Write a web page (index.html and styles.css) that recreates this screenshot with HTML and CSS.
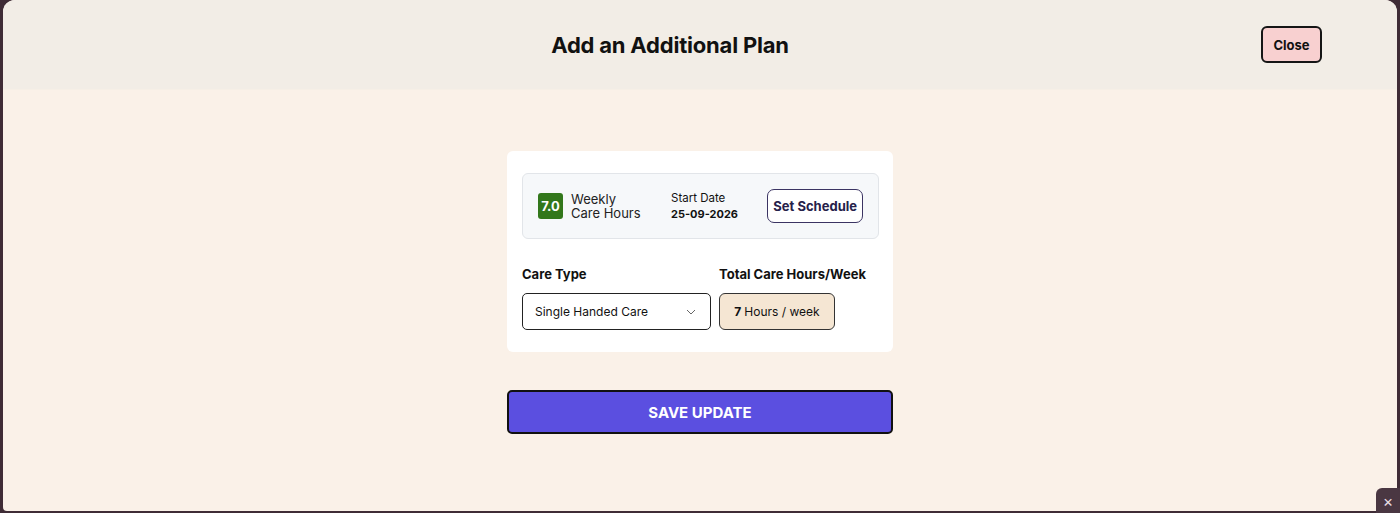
FILE: index.html
```html
<!DOCTYPE html>
<html lang="en">

<head>
  <meta charset="UTF-8">
  <meta name="viewport" content="width=device-width, initial-scale=1.0">
  <title>Add an Additional Plan</title>
  <link rel="stylesheet" href="styles.css">
</head>

<body>
  <div class="modal">
    <div class="modal-head">
      <h1>Add an Additional Plan</h1>
      <button class="close">Close</button>
    </div>
    <div class="modal-body">
      <div class="card">
        <div class="summary">
          <div class="hours">
            <span class="badge">7.0</span>
            <span class="hours-text">Weekly<br>Care Hours</span>
          </div>
          <div class="start">
            <span class="start-label">Start Date</span>
            <span class="start-date">25-09-2026</span>
          </div>
          <button class="schedule">Set Schedule</button>
        </div>
        <div class="fields">
          <div class="field">
            <label>Care Type</label>
            <div class="select">
              <span>Single Handed Care</span>
              <svg width="10" height="6" viewBox="0 0 10 6">
                <path d="M1 1l4 4 4-4" fill="none" stroke="#666" stroke-width="1"/>
              </svg>
            </div>
          </div>
          <div class="field">
            <label>Total Care Hours/Week</label>
            <div class="total"><b>7</b> Hours / week</div>
          </div>
        </div>
      </div>
      <button class="save">SAVE UPDATE</button>
    </div>
  </div>
  <div class="corner">&times;</div>
</body>

</html>
```

FILE: styles.css
```css
* {
  box-sizing: border-box;
}

body {
  margin: 0;
  height: 513px;
  overflow: hidden;
  background: #3f2c36;
  font-family: Inter, "Liberation Sans", sans-serif;
  color: #111;
}

.modal {
  margin: 0 3px;
  height: 511px;
  background: #faf1e8;
  border-radius: 12px 12px 4px 4px;
  overflow: hidden;
}

.modal-head {
  height: 90px;
  background: #f2ede6;
  border-bottom: 1px solid #f6efe6;
  display: flex;
  align-items: center;
  justify-content: center;
  padding-right: 60px;
  position: relative;
}

.modal-head h1 {
  margin: 0;
  font-size: 22px;
  font-weight: 700;
  letter-spacing: -0.2px;
}

.close {
  position: absolute;
  right: 75px;
  top: 26px;
  width: 61px;
  height: 37px;
  background: #f8d0d0;
  border: 2px solid #151515;
  border-radius: 6px;
  font-family: inherit;
  font-size: 13px;
  font-weight: 700;
  color: #111;
}

.modal-body {
  display: flex;
  flex-direction: column;
  align-items: center;
  padding-top: 61px;
}

.card {
  width: 386px;
  background: #fff;
  border-radius: 6px;
  padding: 22px 14px 22px 15px;
}

.summary {
  height: 66px;
  background: #f6f8fa;
  border: 1px solid #e2e5e9;
  border-radius: 6px;
  display: flex;
  align-items: center;
  padding: 0 15px 0 15px;
}

.hours {
  display: flex;
  align-items: center;
  gap: 8px;
  width: 133px;
}

.badge {
  width: 25px;
  height: 26px;
  background: #32771b;
  color: #fff;
  border-radius: 3px;
  font-size: 13px;
  font-weight: 700;
  display: flex;
  align-items: center;
  justify-content: center;
}

.hours-text {
  font-size: 13px;
  line-height: 14px;
  color: #222;
}

.start {
  display: flex;
  flex-direction: column;
  gap: 2px;
  font-size: 11.5px;
}

.start-date {
  font-weight: 700;
  font-size: 11px;
}

.schedule {
  margin-left: auto;
  height: 34px;
  padding: 0 5px;
  background: #fff;
  border: 1px solid #3b3463;
  border-radius: 7px;
  font-family: inherit;
  font-size: 13px;
  font-weight: 700;
  color: #26214a;
}

.fields {
  display: flex;
  gap: 8px;
  margin-top: 27px;
}

.field {
  display: flex;
  flex-direction: column;
  gap: 11px;
}

.field label {
  font-size: 13px;
  font-weight: 700;
}

.select {
  width: 189px;
  height: 37px;
  border: 1px solid #222;
  border-radius: 5px;
  display: flex;
  align-items: center;
  justify-content: space-between;
  padding: 0 14px 0 12px;
  font-size: 12px;
}

.total {
  width: 116px;
  height: 37px;
  background: #f5e6d3;
  border: 1px solid #333;
  border-radius: 6px;
  display: flex;
  align-items: center;
  justify-content: center;
  gap: 3px;
  font-size: 12px;
}

.save {
  width: 386px;
  height: 44px;
  margin-top: 38px;
  background: #5b4fe0;
  border: 2px solid #111;
  border-radius: 5px;
  color: #fff;
  font-family: inherit;
  font-size: 15px;
  font-weight: 700;
}

.corner {
  position: absolute;
  right: 0;
  bottom: 0;
  width: 24px;
  height: 25px;
  background: #4a3742;
  border-radius: 6px 0 0 0;
  color: #e8dde2;
  font-size: 16px;
  display: flex;
  align-items: center;
  justify-content: center;
}
```
